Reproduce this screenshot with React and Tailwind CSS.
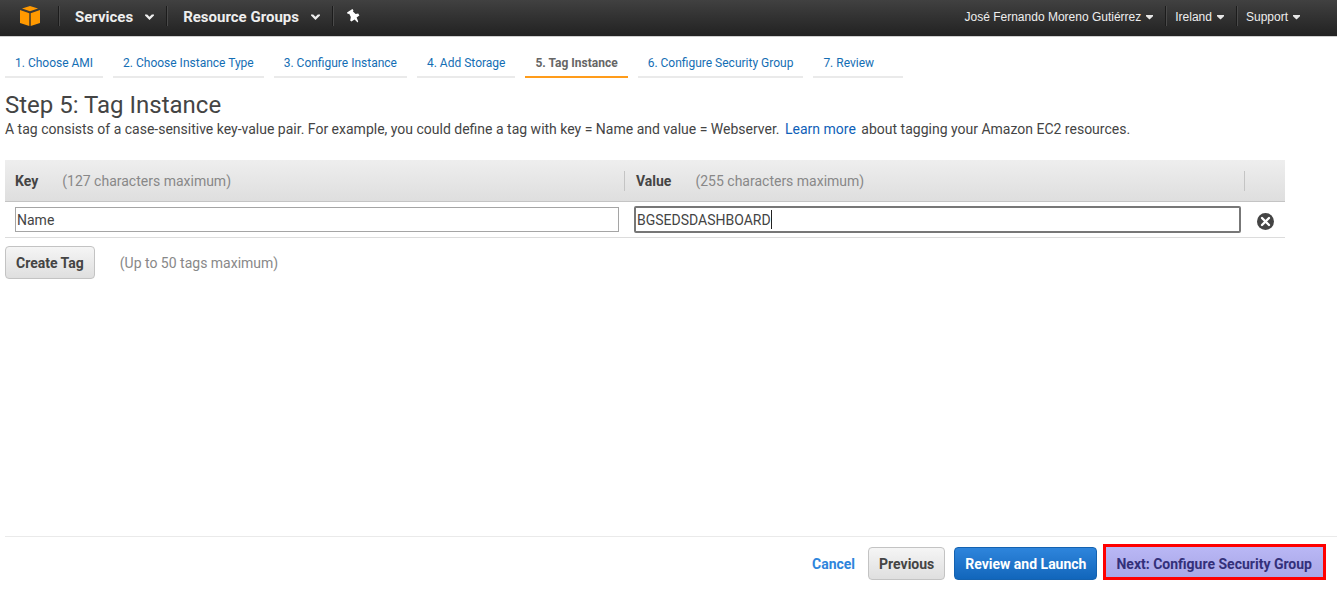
import { useState } from "react";

const steps = [
  "1. Choose AMI",
  "2. Choose Instance Type",
  "3. Configure Instance",
  "4. Add Storage",
  "5. Tag Instance",
  "6. Configure Security Group",
  "7. Review",
];

function CubeLogo() {
  return (
    <svg width="20" height="20" viewBox="0 0 20 20" fill="#ff9900" aria-hidden="true">
      <path d="M10 0 18 2.6 10 5.3 2 2.6Z" />
      <path d="M0 4 9.3 7.2V20L0 17Z" />
      <path d="M20 4 10.7 7.2V20L20 17Z" />
    </svg>
  );
}

function Chevron() {
  return (
    <svg width="9" height="6" viewBox="0 0 9 6" fill="#eee" aria-hidden="true">
      <path d="M0 .5h2.2l2.3 2.3L6.8.5H9v1L4.5 6 0 1.5Z" />
    </svg>
  );
}

function SmallCaret() {
  return (
    <svg width="7" height="5" viewBox="0 0 7 5" fill="#e6e6e6" aria-hidden="true">
      <path d="M0 0h7v1.2L3.5 4.6 0 1.2Z" />
    </svg>
  );
}

function Pin() {
  return (
    <svg width="13" height="14" viewBox="0 0 13 14" fill="#fff" aria-hidden="true">
      <path d="M0 3.6 5.4 0 6.4 1.2 6 2.6 8.6 5 11.2 4.6 12.4 6.4 9.6 8.6 11.2 12.4 10.6 13.6 7.6 10.4 4.4 12.6 3.2 11.4 3.8 8 2.2 4.8.8 5Z" />
    </svg>
  );
}

function Divider() {
  return <span className="box-content h-5 w-px shrink-0 border-l border-[#1c1c1c] bg-[#4a4a4a]" />;
}

function RemoveIcon() {
  return (
    <svg width="17" height="17" viewBox="0 0 17 17" aria-hidden="true">
      <circle cx="8.5" cy="8.5" r="8.5" fill="#444" />
      <path d="M5 5l7 7M12 5l-7 7" stroke="#fff" strokeWidth="2.4" strokeLinecap="round" />
    </svg>
  );
}

const button =
  "h-[33px] rounded border px-[10px] text-sm font-bold whitespace-nowrap";
const greyButton =
  "border-[#c3c3c3] bg-linear-to-b from-[#f5f5f5] to-[#dfdfdf] text-[#444]";

function TopBar() {
  return (
    <header className="flex h-[37px] items-start justify-between border-b border-[#cfcfcf] bg-linear-to-b from-[#414141] to-[#222] text-[#eee] [text-shadow:0_1px_1px_#000]">
      <nav className="flex h-8 items-center pl-5 text-[15px] font-bold">
        <a href="#home" aria-label="Console home" className="mr-[18px]">
          <CubeLogo />
        </a>
        <Divider />
        <button className="flex items-center gap-3 pt-[3px] pr-3 pl-[15px]">
          Services <Chevron />
        </button>
        <Divider />
        <button className="flex items-center gap-3 pt-[3px] pr-3 pl-[15px]">
          Resource Groups <Chevron />
        </button>
        <Divider />
        <button aria-label="Pin shortcuts" className="px-[13px]">
          <Pin />
        </button>
      </nav>
      <nav className="flex h-8 items-center pr-[29px] font-['Liberation_Sans',sans-serif] text-xs">
        <button className="flex items-center gap-[5px] px-3 pt-[2px]">
          José Fernando Moreno Gutiérrez <SmallCaret />
        </button>
        <Divider />
        <button className="flex items-center gap-[5px] pt-[2px] pr-3 pl-2">
          Ireland <SmallCaret />
        </button>
        <Divider />
        <button className="flex items-center gap-[5px] px-2 pt-[2px]">
          Support <SmallCaret />
        </button>
      </nav>
    </header>
  );
}

export default function App() {
  const [key, setKey] = useState("Name");
  const [value, setValue] = useState("BGSEDSDASHBOARD");

  return (
    <div className="flex min-h-screen flex-col bg-white font-[Roboto,sans-serif] text-sm text-[#444]">
      <TopBar />
      <main className="flex-1 pl-[5px]">
        <nav className="flex gap-[10px] pt-[10px] text-xs">
          {steps.map((step, i) => (
            <a
              key={step}
              href={"#step-" + (i + 1)}
              aria-current={i === 4 ? "step" : undefined}
              className={
                "h-[31px] min-w-[90px] border-b-2 px-[10px] leading-8 whitespace-nowrap " +
                (i === 4
                  ? "border-[#ff9c1a] font-bold text-[#666]"
                  : "border-[#eaeaea] text-[#146eb4]")
              }
            >
              {step}
            </a>
          ))}
        </nav>

        <h1 className="mt-3 text-2xl leading-[30px]">Step 5: Tag Instance</h1>
        <p className="leading-[18px]">
          A tag consists of a case-sensitive key-value pair. For example, you could define a tag
          with key = Name and value = Webserver.{" "}
          <a href="#learn-more" className="mx-[2px] text-[#0f5fb8]">
            Learn more
          </a>{" "}
          about tagging your Amazon EC2 resources.
        </p>

        <div className="mt-[22px] pr-[52px]">
          <table className="w-full table-fixed border-separate border-spacing-0 text-left">
            <thead>
              <tr className="h-[42px] bg-linear-to-b from-[#eeeeee] to-[#dedede]">
                <th className="border-b border-[#c4c4c4] p-0 font-normal">
                  <div className="flex h-5 items-center border-r border-[#c4c4c4] pl-[10px]">
                    <span className="mr-6 font-bold">Key</span>
                    <span className="text-[#888]">(127 characters maximum)</span>
                  </div>
                </th>
                <th className="border-b border-[#c4c4c4] p-0 font-normal">
                  <div className="flex h-5 items-center border-r border-[#c4c4c4] pl-[11px]">
                    <span className="mr-6 font-bold">Value</span>
                    <span className="text-[#888]">(255 characters maximum)</span>
                  </div>
                </th>
                <th className="w-10 border-b border-[#c4c4c4] p-0" aria-label="Remove" />
              </tr>
            </thead>
            <tbody>
              <tr className="h-9">
                <td className="border-b border-[#dcdcdc] py-0 pr-[6px] pl-[10px]">
                  <input
                    aria-label="Key"
                    value={key}
                    onChange={(e) => setKey(e.target.value)}
                    className="block h-[25px] w-full border border-[#a5a5a5] px-px outline-none"
                  />
                </td>
                <td className="border-b border-[#dcdcdc] py-0 pr-1 pl-[9px]">
                  <div className="relative">
                    <input
                      aria-label="Value"
                      autoFocus
                      value={value}
                      onChange={(e) => setValue(e.target.value)}
                      className="block h-[27px] w-full rounded-xs border-2 border-[#777] px-px caret-transparent outline-none"
                    />
                    <div
                      aria-hidden="true"
                      className="pointer-events-none absolute inset-y-1 left-[3px] flex"
                    >
                      <span className="invisible whitespace-pre">{value}</span>
                      <span className="w-px bg-[#222]" />
                    </div>
                  </div>
                </td>
                <td className="border-b border-[#dcdcdc] p-0">
                  <button aria-label="Remove tag" className="mt-1 ml-3 block">
                    <RemoveIcon />
                  </button>
                </td>
              </tr>
            </tbody>
          </table>
        </div>

        <div className="mt-2 flex items-center gap-[25px]">
          <button className={button + " " + greyButton}>Create Tag</button>
          <span className="text-[#888]">(Up to 50 tags maximum)</span>
        </div>
      </main>

      <footer className="ml-[5px] flex h-[59px] items-start justify-end border-t border-[#eaeaea] pt-[7px] pr-[11px]">
        <a href="#cancel" className="mt-[3px] mr-[13px] leading-[34px] font-bold text-[#2e85dc]">
          Cancel
        </a>
        <button className={"mt-[3px] mr-[9px] " + button + " " + greyButton}>Previous</button>
        <button
          className={
            "mt-[3px] mr-[6px] border-[#1462b0] bg-linear-to-b from-[#2e85dc] to-[#1166bb] text-white " +
            button
          }
        >
          Review and Launch
        </button>
        <button className="h-9 border-3 border-[#ff0000] bg-linear-to-b from-[#b9b7f5] to-[#a9a7e6] pt-1 pr-[11px] pl-[10px] font-bold whitespace-nowrap text-[#33307a]">
          Next: Configure Security Group
        </button>
      </footer>
    </div>
  );
}
